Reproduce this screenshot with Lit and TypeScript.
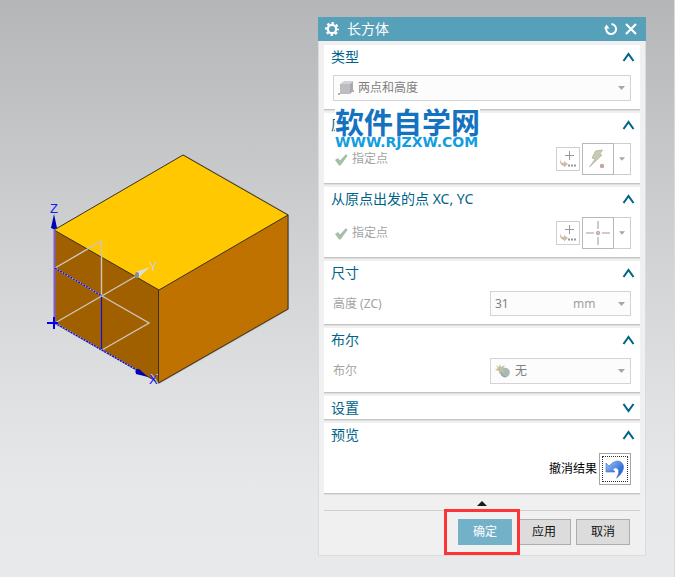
import { LitElement, html, svg, css, nothing, type TemplateResult } from "lit";
import { customElement, property, state } from "lit/decorators.js";

const FONT = css`"Noto Sans", "Noto Sans CJK SC", sans-serif`;

/* ---------- 3D viewport with the block preview ---------- */
@customElement("model-view")
class ModelView extends LitElement {
  static styles = css`
    :host { display: block; min-width: 0; }
    svg { display: block; width: 100%; height: auto; }
    .edge { stroke: #3a3020; stroke-width: 1; fill: none; }
    .halo { stroke: #a9a9a9; stroke-width: 2; fill: none; }
    .top { fill: #ffc800; }
    .front { fill: #a06000; }
    .side { fill: #c07200; }
    .pale { stroke: #cdc6bd; stroke-width: 1.4; fill: none; }
    .axis { stroke: #1010d8; stroke-width: 1.2; fill: none; }
    .dash { stroke: #0a0af0; stroke-width: 1.4; stroke-dasharray: 2 1; fill: none; }
    .zline { stroke: #7b5fd0; stroke-width: 2; }
    .origin { stroke: #0000f0; stroke-width: 2; }
    .cone { fill: #0000b4; }
    .grey-cone { fill: #dcdcdc; }
    .cone-base { fill: #8c8c8c; }
    text { font: 13px "Liberation Sans", sans-serif; }
    .blue { fill: #1414ff; }
    .grey { fill: #cfcfcf; }
  `;
  render() {
    return html`
      <svg viewBox="0 0 318 420" role="img" aria-label="长方体预览">
        ${svg`
          <path class="halo" d="M183 155L288 215V309L159 383"/>
          <path class="top" d="M54 230L183 155L288 215L159 290Z"/>
          <path class="front" d="M54 230L159 290V383L54 323Z"/>
          <path class="side" d="M159 290L288 215V309L159 383Z"/>
          <path class="edge" d="M54 230L183 155L288 215L159 290ZM158.500 290V383L288 309V215M54 323L159 383"/>
          <path class="zline" d="M54.500 228V323"/>
          <path class="pale" d="M55 268L101.500 241V296M55 323L138 275M102 296L149 323L102 350"/>
          <path class="axis" d="M101.500 297V350"/>
          <path class="pale" d="M55 268L102 296M55 323L140 372"/>
          <path class="dash" d="M55 268L102 296M55 323L140 372"/>
          <path class="origin" d="M47 323H58M54 317V329"/>
          <path class="cone" d="M54 214L57 228Q54 230 51 228Z"/>
          <path class="cone" d="M148 377L139 369Q134 369 136 374Z"/>
          <path class="grey-cone" d="M150 267L136 272L138 278Z"/>
          <ellipse class="cone-base" cx="137" cy="275" rx="2" ry="3"/>
          <text class="blue" x="50" y="213">Z</text>
          <text class="grey" x="149" y="271">Y</text>
          <text class="grey" x="150" y="383">X</text>
          <text class="blue" x="149" y="384">X</text>
        `}
      </svg>`;
  }
}

/* ---------- collapsible group of the dialog ---------- */
@customElement("dialog-group")
class DialogGroup extends LitElement {
  @property() heading = "";
  @property({ type: Boolean, reflect: true }) open = false;
  static styles = css`
    :host {
      display: block; position: relative; background: #fff;
      border-bottom: 1px solid #c4c4c4; box-shadow: 0 1px 0 #dedede;
    }
    .head { display: flex; align-items: center; justify-content: space-between; height: 23px; padding: 0 5px 0 7px; box-sizing: border-box; }
    h2 { margin: 0; font: 14px/22px ${FONT}; color: #00648a; }
    .toggle { display: flex; padding: 0; border: 0; background: none; cursor: pointer; }
    .toggle path { fill: none; stroke: #00648a; stroke-width: 2.1; }
    .body { padding: 7px 9px 8px; }
  `;
  render() {
    return html`
      <div class="head">
        <h2>${this.heading}</h2>
        <button class="toggle" aria-label=${this.heading} aria-expanded=${this.open} @click=${() => (this.open = !this.open)}>
          <svg width="13" height="12" viewBox="0 0 13 12">
            ${this.open ? svg`<path d="M1.500 10L6.500 3L11.500 10"/>` : svg`<path d="M1.500 2L6.500 9L11.500 2"/>`}
          </svg>
        </button>
      </div>
      ${this.open ? html`<div class="body"><slot></slot></div>` : nothing}`;
  }
}

const gear = html`<svg width="16" height="16" viewBox="0 0 16 16">
  <circle cx="8" cy="8" r="6" fill="none" stroke="#fff" stroke-width="2" stroke-dasharray="2.500 2.212" stroke-dashoffset="1.250"/>
  <circle cx="8" cy="8" r="4.200" fill="none" stroke="#fff" stroke-width="2.200"/></svg>`;
const resetIcon = html`<svg width="14" height="14" viewBox="0 0 14 14">
  <path d="M7.500 2A5 5 0 1 1 2.200 6" fill="none" stroke="#fff" stroke-width="2"/>
  <path d="M0 6.500L2.500 2.500L5.500 6.500Z" fill="#fff"/></svg>`;
const closeIcon = html`<svg width="12" height="12" viewBox="0 0 12 12">
  <path d="M1 1L11 11M11 1L1 11" stroke="#fff" stroke-width="2.200"/></svg>`;
const cubeIcon = html`<svg width="16" height="16" viewBox="0 0 16 16">
  <path d="M2 4L6 1H15L12 4Z" fill="#d2d2d6"/><path d="M2 4H12V14H2Z" fill="#bcbcc1"/><path d="M12 4L15 1V11L12 14Z" fill="#a8a8ad"/>
  <path d="M0 13h2v2h-2zM14 10h2v2h-2z" fill="#cfa3a0"/></svg>`;
const checkIcon = html`<svg width="13" height="13" viewBox="0 0 13 13">
  <path d="M0 7L3 5L5 7.500L11 1L12.500 3L5.500 12.500H4Z" fill="#a3bfa9"/></svg>`;
const pointDialogIcon = html`<svg width="18" height="18" viewBox="0 0 18 18">
  <path d="M10.500 1V10M6 5.500H15" stroke="#999" stroke-width="1"/>
  <path d="M1 8Q1 13 5 13V11L9 14L5 17.500V16Q0 15 1 8Z" fill="#cdbda6"/>
  <path d="M9 15.500h2M12 15.500h2M15 15.500h2" stroke="#999" stroke-width="2"/></svg>`;
const boltIcon = html`<svg width="20" height="22" viewBox="0 0 20 22">
  <path d="M7.500 3L14.500 2L11.500 6.500L14 7L1.500 19L7 11L4 10Z" fill="#cbcab5" stroke="#b3b3a6" stroke-width=".8"/>
  <circle cx="14" cy="18" r="2.200" fill="#c9a2a4"/></svg>`;
const crossIcon = html`<svg width="24" height="24" viewBox="0 0 24 24">
  <path d="M12 0V8M12 16V24M0 12H8M16 12H24" stroke="#bdbdbd" stroke-width="1.600"/>
  <circle cx="12" cy="12" r="1.800" fill="#d9b8b8" stroke="#b79a9a" stroke-width=".8"/></svg>`;
const unionIcon = html`<svg width="16" height="14" viewBox="0 0 16 14">
  <circle cx="10" cy="8.500" r="4.800" fill="#a9b9b6"/><path d="M5.500 7Q6 12.500 11 13" stroke="#8b9c98" fill="none"/>
  <path d="M5 0L6 3L10 1L8 5L10 8L6 8L4 10L4 7L0 6L3 4L1 1L4 3Z" fill="#c3c0a2"/></svg>`;
const undoIcon = html`<svg width="20" height="19" viewBox="0 0 20 19">
  <defs><linearGradient id="u" x1="0" y1="0" x2="1" y2="1"><stop offset="0" stop-color="#a9c8f8"/><stop offset=".6" stop-color="#3b78dd"/><stop offset="1" stop-color="#2050c0"/></linearGradient></defs>
  <path d="M1 3V12H10L7.500 9Q11 6.500 13 9Q15 12 11.500 18Q19 12.500 18.500 6Q17 1 12 1Q8 1.500 4 6Z" fill="url(#u)" stroke="#3a6fd0" stroke-width=".6"/></svg>`;
const arrow = html`<svg class="arrow" width="7" height="4" viewBox="0 0 7 4"><path d="M0 0H7L3.500 4Z" fill="#a6a6a6"/></svg>`;

@customElement("app-root")
class AppRoot extends LitElement {
  @state() private height = "31";

  static styles = css`
    :host {
      display: grid; grid-template-columns: minmax(0, 318fr) minmax(300px, 328fr); align-items: start;
      min-height: 100vh; box-sizing: border-box; padding-right: 28px; border-right: 1px solid #d9d9d9;
      background: linear-gradient(#b5b6b8, #d0d1d3 42%, #dfe0e2 68%, #e6e8ea 85%, #e8e9eb);
      font: 12px/18px ${FONT}; color: #000;
    }
    button, input, select { font: inherit; color: inherit; margin: 0; box-sizing: border-box; border-radius: 0; }
    svg { display: block; flex: none; }
    .dialog { margin-top: 17px; background: #f0f0f0; border: 1px solid #dcdcdc; border-top: 0; box-sizing: border-box; }
    .title { display: flex; align-items: center; gap: 7px; height: 24px; margin: 0 -1px; padding: 0 9px 0 6px; background: #56a0b9; color: #fff; }
    .title h1 { flex: 1; margin: 0; font: 14px/24px ${FONT}; }
    .title button { display: flex; padding: 0; border: 0; background: none; }
    .groups { display: flex; flex-direction: column; gap: 3px; padding: 4px 5px 0; }
    .row { display: flex; align-items: center; color: #a3a3a3; }
    .row label, .row .label { flex: 1; }
    .field { position: relative; display: flex; align-items: center; width: 141px; height: 26px; box-sizing: border-box; border: 1px solid #d4d4d4; background: #fcfcfc; color: #808080; }
    .field.wide { width: 100%; }
    .field.entry { height: 25px; }
    .field select, .field input { appearance: none; width: 100%; height: 100%; min-width: 0; border: 0; background: none; padding: 0 4px; opacity: 1; }
    .field .with-icon { padding-left: 24px; }
    .field .unit { width: 57px; flex: none; color: #a0a0a0; padding: 0; }
    .field .icon { position: absolute; left: 4px; }
    .field .arrow { position: absolute; right: 5px; pointer-events: none; }
    .point { height: 32px; }
    .point .label { display: flex; align-items: center; gap: 4px; padding-left: 2px; }
    .tool { display: flex; align-items: center; justify-content: center; padding: 0; background: #fff; border: 1px solid #cfcfcf; }
    .small { width: 24px; height: 24px; margin-right: 2px; }
    .big { width: 32px; height: 32px; border-color: #b8b8b8; }
    .drop { width: 17px; height: 32px; border-left: 0; }
    .drop .arrow { width: 6px; }
    .preview { justify-content: flex-end; gap: 2px; color: #000; }
    .undo { width: 32px; height: 32px; padding: 2px; background: #fff; border: 1px solid #a6a6a6; }
    .undo span { display: flex; align-items: center; justify-content: center; height: 26px; border: 1px dotted #333; box-sizing: border-box; }
    .mark { position: absolute; left: 11px; top: -7px; background: #fff; white-space: nowrap; }
    .mark-name { font: bold 29px/30px "Noto Sans CJK SC", sans-serif; color: #1472bf; }
    .mark-site { font: bold 14px/13px "DejaVu Sans", sans-serif; color: #119de0; }
    .more { display: flex; justify-content: center; margin: 0 5px; padding: 7px 0 4px; border: 0; border-bottom: 1px solid #d0d0d0; }
    .actions { display: flex; justify-content: flex-end; gap: 5px; padding: 8px 15px 10px; }
    .actions button { width: 54px; height: 26px; padding: 0; background: #dcdcdc; border: 1px solid #adadad; color: #111; }
    .primary-wrap { position: relative; display: flex; }
    .actions .primary { background: #73b1c8; border-color: #73b1c8; color: #fff; }
    .primary-wrap::after { content: ""; position: absolute; inset: -10px -8px -10px -14px; border: 3px solid #fb3436; z-index: 1; pointer-events: none; }
  `;

  private pointRow(icon: TemplateResult) {
    return html`<div class="row point">
      <span class="label">${checkIcon}指定点</span>
      <button class="tool small" aria-label="点对话框">${pointDialogIcon}</button>
      <button class="tool big" aria-label="指定点">${icon}</button>
      <button class="tool drop" aria-label="点类型">${arrow}</button>
    </div>`;
  }

  render() {
    return html`
      <model-view></model-view>
      <section class="dialog" role="dialog" aria-label="长方体">
        <header class="title">
          ${gear}<h1>长方体</h1>
          <button aria-label="重置">${resetIcon}</button>
          <button aria-label="关闭">${closeIcon}</button>
        </header>
        <div class="groups">
          <dialog-group heading="类型" open>
            <div class="field wide">
              <span class="icon">${cubeIcon}</span>
              <select class="with-icon" aria-label="类型"><option>两点和高度</option></select>${arrow}
            </div>
          </dialog-group>
          <dialog-group heading="原点" open>
            ${this.pointRow(boltIcon)}
            <div class="mark"><div class="mark-name">软件自学网</div><div class="mark-site">WWW.RJZXW.COM</div></div>
          </dialog-group>
          <dialog-group heading="从原点出发的点 XC, YC" open>${this.pointRow(crossIcon)}</dialog-group>
          <dialog-group heading="尺寸" open>
            <div class="row">
              <label for="height">高度 (ZC)</label>
              <div class="field entry">
                <input id="height" .value=${this.height} @input=${(e: Event) => (this.height = (e.target as HTMLInputElement).value)} />
                <select class="unit" aria-label="单位"><option>mm</option></select>${arrow}
              </div>
            </div>
          </dialog-group>
          <dialog-group heading="布尔" open>
            <div class="row">
              <label for="bool">布尔</label>
              <div class="field">
                <span class="icon">${unionIcon}</span>
                <select id="bool" class="with-icon"><option>无</option></select>${arrow}
              </div>
            </div>
          </dialog-group>
          <dialog-group heading="设置"></dialog-group>
          <dialog-group heading="预览" open>
            <div class="row preview">
              <span id="undo-label">撤消结果</span>
              <button class="undo" aria-labelledby="undo-label"><span>${undoIcon}</span></button>
            </div>
          </dialog-group>
        </div>
        <div class="more"><svg width="10" height="5" viewBox="0 0 10 5"><path d="M0 5L5 0L10 5Z" fill="#1a1a1a"/></svg></div>
        <footer class="actions">
          <span class="primary-wrap"><button class="primary">确定</button></span>
          <button>应用</button>
          <button>取消</button>
        </footer>
      </section>`;
  }
}
